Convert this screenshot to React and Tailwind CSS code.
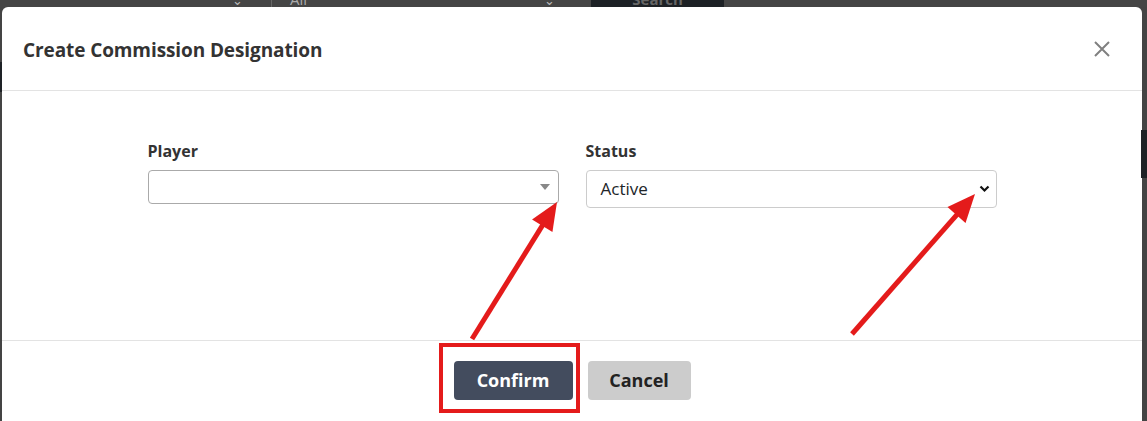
import React from 'react';

const font = { fontFamily: '"Open Sans", "Noto Sans", sans-serif' };

/* red annotation arrow, drawn from tail to tip */
function Arrow({ x1, y1, x2, y2 }) {
  const dx = x2 - x1;
  const dy = y2 - y1;
  const len = Math.hypot(dx, dy);
  const ux = dx / len;
  const uy = dy / len;
  const head = 28;
  const half = 12;
  const bx = x2 - ux * head;
  const by = y2 - uy * head;
  const pts = [
    `${x2},${y2}`,
    `${bx - uy * half},${by + ux * half}`,
    `${bx + uy * half},${by - ux * half}`,
  ].join(' ');
  return (
    <g>
      <line x1={x1} y1={y1} x2={bx + ux * 4} y2={by + uy * 4} stroke="#e41b1b" strokeWidth="5" />
      <polygon points={pts} fill="#e41b1b" />
    </g>
  );
}

function Backdrop() {
  return (
    <div className="relative h-[7px] overflow-hidden bg-[#454545]">
      <div className="absolute left-0 top-[-14px] flex h-[21px] items-end">
        <span className="ml-[232px] text-[13px] leading-none text-[#bbb]">⌄</span>
        <span className="ml-[28px] h-[21px] w-px bg-[#666]" />
        <span className="ml-[18px] text-[15px] leading-none text-[#aaa]">All</span>
        <span className="ml-[237px] text-[13px] leading-none text-[#bbb]">⌄</span>
        <span className="ml-[36px] flex h-[21px] w-[133px] items-end justify-center bg-[#1d2125] text-[15px] font-bold leading-none text-[#666]">
          Search
        </span>
      </div>
    </div>
  );
}

export default function App() {
  return (
    <div className="relative h-[421px] w-[1147px] overflow-hidden bg-[#444444]" style={font}>
      <Backdrop />
      <div className="absolute right-0 top-[130px] h-[48px] w-[6px] bg-[#1e2226]" />
      <div className="absolute left-0 top-[62px] h-[30px] w-[2px] bg-[#1e2226]" />

      {/* Modal */}
      <div className="ml-[2px] mr-[5px] flex h-[420px] flex-col rounded-t-[6px] bg-white">
        <div className="flex h-[84px] items-center justify-between border-b border-[#e3e3e3] pl-[21px] pr-[31px]">
          <h2 className="mt-[3px] text-[19px] font-bold tracking-[-0.1px] text-[#333]">Create Commission Designation</h2>
          <svg width="18" height="18" viewBox="0 0 18 18" className="mt-[1px]">
            <path d="M2 2L16 16M16 2L2 16" stroke="#808080" strokeWidth="2" />
          </svg>
        </div>

        <div className="flex h-[249px] justify-center gap-[27px] pt-[49px]">
          <div className="w-[411px]">
            <label className="block text-[16px] font-bold leading-[22px] text-[#333]">Player</label>
            <div className="mt-[8px] flex h-[34px] items-center justify-end rounded-[4px] border border-[#aaa] pr-[8px]">
              <svg width="10" height="6" viewBox="0 0 10 6">
                <path d="M0 0H10L5 6Z" fill="#888" />
              </svg>
            </div>
          </div>
          <div className="w-[411px]">
            <label className="block text-[16px] font-bold leading-[22px] text-[#333]">Status</label>
            <div className="mt-[8px] flex h-[38px] items-center justify-between rounded-[4px] border border-[#ccc] pl-[14px] pr-[6px]">
              <span className="text-[17px] text-[#212529]">Active</span>
              <svg width="11" height="8" viewBox="0 0 11 8">
                <path d="M1.5 1.5L5.5 5.5L9.5 1.5" fill="none" stroke="#111" strokeWidth="2.2" />
              </svg>
            </div>
          </div>
        </div>

        <div className="flex justify-center gap-[15px] border-t border-[#e3e3e3] pt-[20px]">
          <button className="h-[39px] w-[119px] rounded-[4px] bg-[#434c5e] text-[18px] font-bold text-white">
            Confirm
          </button>
          <button className="h-[39px] w-[103px] rounded-[4px] bg-[#cccccc] text-[18px] font-bold text-[#222]">
            Cancel
          </button>
        </div>
      </div>

      {/* annotations */}
      <div className="absolute left-[439px] top-[343px] h-[70px] w-[141px] border-[4px] border-[#e41b1b]" />
      <svg className="pointer-events-none absolute left-0 top-0" width="1147" height="421">
        <Arrow x1={472} y1={339} x2={557} y2={202} />
        <Arrow x1={852} y1={334} x2={975} y2={194} />
      </svg>
    </div>
  );
}
